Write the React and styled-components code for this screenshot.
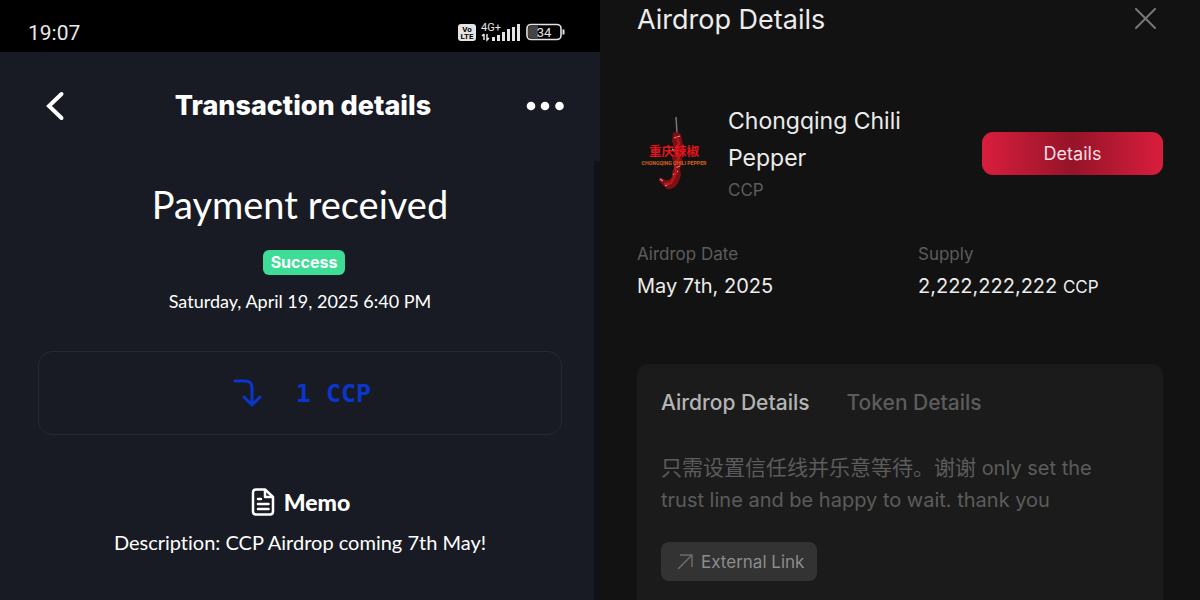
import React from 'react';
import styled, { createGlobalStyle } from 'styled-components';

const Global = createGlobalStyle`
  * { box-sizing: border-box; }
  body { margin: 0; background: #121212; }
  button { border: 0; padding: 0; margin: 0; background: none; font: inherit; color: inherit; cursor: pointer; }
  h1, h2, h3, p, dl, dd, dt { margin: 0; font-weight: 400; }
`;

const Page = styled.main`
  display: grid;
  grid-template-columns: minmax(0, 1fr) minmax(0, 1fr);
  min-height: 100vh;
`;

const Phone = styled.section`
  position: relative;
  display: flex;
  flex-direction: column;
  background: #181b23;
  color: #fff;
  font-family: Lato, sans-serif;
  font-variant-ligatures: none;
  text-align: center;
`;

const ScrollTrack = styled.div`
  position: absolute;
  top: 161px;
  right: 0;
  bottom: 0;
  width: 6px;
  background: #111217;
`;

const StatusBar = styled.div`
  display: flex;
  justify-content: space-between;
  align-items: center;
  height: 52px;
  padding: 13px 34px 0 28px;
  background: #000;
  color: #e8e8e8;
  font-family: Roboto, sans-serif;
`;

const Clock = styled.time`
  font-size: 21px;
  line-height: 24px;
`;

const StatusIcons = styled.svg`
  width: 108px;
  height: 24px;
`;

const TopBar = styled.header`
  display: flex;
  justify-content: space-between;
  align-items: center;
  height: 108px;
  padding: 0 34px 0 40px;
`;

const IconButton = styled.button`
  display: flex;
  justify-content: center;
  align-items: center;
  min-width: 36px;
  height: 40px;
`;

const BackButton = styled(IconButton)`
  width: 40px;
  justify-content: flex-start;
`;

const ScreenTitle = styled.h1`
  font-family: Inter, sans-serif;
  font-size: 27px;
  line-height: 36px;
  font-weight: 800;
`;

const Payment = styled.div`
  display: flex;
  flex-direction: column;
  align-items: center;
  padding: 18px 38px 0;
`;

const PaymentTitle = styled.h2`
  font-size: 38px;
  line-height: 52px;
`;

const Status = styled.span`
  margin: 20px 0 14px 8px;
  padding: 0 8px;
  border-radius: 6px;
  background: #3ddc97;
  font-family: Inter, sans-serif;
  font-size: 16px;
  line-height: 25px;
  font-weight: 700;
`;

const PaidAt = styled.p`
  font-size: 18px;
  line-height: 24px;
`;

const Amount = styled.div`
  display: flex;
  justify-content: center;
  align-items: center;
  gap: 33px;
  width: 100%;
  height: 84px;
  margin: 38px 0 47px;
  padding-left: 4px;
  border: 1px solid #262932;
  border-radius: 14px;
  color: #0a36cc;
  font-family: "DejaVu Sans Mono", monospace;
  font-size: 25px;
  font-weight: 700;
`;

const MemoTitle = styled.h3`
  display: flex;
  align-items: center;
  gap: 8px;
  margin-bottom: 8px;
  font-size: 23px;
  line-height: 40px;
  font-weight: 900;
`;

const MemoText = styled.p`
  font-size: 20px;
  line-height: 24px;
`;

const Airdrop = styled.section`
  display: flex;
  flex-direction: column;
  padding: 0 37px;
  background: #121212;
  color: #ececec;
  font-family: Inter, "Noto Sans CJK SC", sans-serif;
`;

const AirdropHeader = styled.header`
  display: flex;
  justify-content: space-between;
  align-items: center;
  height: 40px;
  margin-bottom: 63px;
`;

const AirdropTitle = styled.h1`
  font-size: 27px;
  line-height: 36px;
`;

const Token = styled.div`
  display: flex;
  align-items: center;
  height: 100px;
`;

const TokenText = styled.div`
  flex: 1;
  padding-left: 17px;
`;

const TokenName = styled.h2`
  max-width: 200px;
  font-size: 23px;
  line-height: 37px;
`;

const Ticker = styled.p`
  color: #5c5c5c;
  font-size: 17px;
  line-height: 26px;
`;

const DetailsButton = styled.button`
  width: 181px;
  height: 43px;
  border-radius: 11px;
  background: linear-gradient(90deg, #d91e3d, #951429 50%, #d91e3d);
  color: #fbdde2;
  font-size: 18px;
`;

const Facts = styled.dl`
  display: grid;
  grid-template-columns: 281px 1fr;
  margin: 38px 0 57px;
`;

const FactLabel = styled.dt`
  color: #5c5c5c;
  font-size: 17px;
  line-height: 26px;
`;

const FactValue = styled.dd`
  font-size: 20px;
  line-height: 39px;
`;

const Unit = styled.span`
  font-size: 17px;
`;

const Card = styled.div`
  flex: 1;
  padding: 20px 24px 19px;
  border-radius: 12px 12px 0 0;
  background: #1b1b1b;
`;

const Tabs = styled.div`
  display: flex;
  gap: 37px;
  margin-bottom: 30px;
`;

const Tab = styled.button`
  color: ${(p) => (p.$active ? '#b4b4b4' : '#5c5c5c')};
  font-size: 21px;
  line-height: 38px;
  font-weight: 500;
`;

const Note = styled.p`
  max-width: 450px;
  margin-bottom: 26px;
  color: #5c5c5c;
  font-size: 20px;
  line-height: 32px;
`;

const Chinese = styled.span`
  font-size: 21px;
`;

const Link = styled.a`
  display: flex;
  width: fit-content;
  align-items: center;
  gap: 8px;
  height: 39px;
  padding: 0 13px 0 16px;
  border-radius: 8px;
  background: #333;
  color: #8c8c8c;
  font-size: 17px;
  text-decoration: none;
`;

const BAR_HEIGHTS = [4, 6, 9, 12, 14, 17];

function DeviceStatus() {
  return (
    <StatusIcons viewBox="0 0 108 24" role="img" aria-label="VoLTE, 4G+, battery 34">
      <rect x="0" y="3" width="18" height="17" rx="3" fill="#e4e4e4" />
      <g fill="#000" fontWeight="700" fontSize="8" textAnchor="middle">
        <text x="9" y="11">Vo</text>
        <text x="9" y="18">LTE</text>
      </g>
      <text x="23" y="10" fill="#e4e4e4" fontSize="11">4G+</text>
      <path d="M26 13v6M24 15l2-2M29 13v6l2-2" stroke="#e4e4e4" strokeWidth="1.500" fill="none" />
      {BAR_HEIGHTS.map((h, i) => (
        <rect key={h} x={34 + i * 5} y={20 - h} width="3" height={h} fill="#e4e4e4" />
      ))}
      <path d="M73 5h7v12h-7a3 3 0 0 1-3-3V8a3 3 0 0 1 3-3z" fill="#444" />
      <rect x="69" y="3.500" width="34" height="15" rx="4" fill="none" stroke="#e4e4e4" strokeWidth="1.600" />
      <path d="M105.500 8.500v5" stroke="#e4e4e4" strokeWidth="2" />
      <text x="86" y="15.500" fill="#e4e4e4" fontSize="13" textAnchor="middle">34</text>
    </StatusIcons>
  );
}

function ChiliLogo() {
  return (
    <svg width="74" height="80" viewBox="0 0 74 80" role="img" aria-label="Chongqing Chili Pepper">
      <path d="M39 4l1 16" stroke="#777" strokeWidth="1.500" />
      <path d="M36 20q5-3 8 2l2 10-2 9 2 9-3 5 1 7-3 8q-4 7-11 6l-8-8q-1-4 3-3 4 4 8 1 3-2 2-7l3-6-3-8 3-8-3-9z" fill="#7d0f15" />
      <path d="M37 25l6-2M35 36l4 3M38 55l5-2M36 62l5-4M28 73l5-3M23 66l3 2" stroke="#d9908c" strokeWidth="1.200" />
      <path d="M40 24l2 7-4 6 4 7-4 8 1 8-5 10-7 1" fill="none" stroke="#b3181d" strokeWidth="2.500" />
      <text x="37" y="43" fill="#e3141b" fontFamily="'Noto Sans CJK SC', sans-serif" fontSize="12.500" fontWeight="700" textAnchor="middle">重庆辣椒</text>
      <text x="37" y="52" fill="#d4651c" fontFamily="Roboto, sans-serif" fontSize="5.200" fontWeight="700" textAnchor="middle">CHONGQING CHILI PEPPER</text>
    </svg>
  );
}

export default function App() {
  return (
    <Page>
      <Global />
      <Phone>
        <StatusBar>
          <Clock>19:07</Clock>
          <DeviceStatus />
        </StatusBar>
        <TopBar>
          <BackButton aria-label="Back">
            <svg width="30" height="32" viewBox="0 0 30 32" fill="none" stroke="#fff" strokeWidth="4" strokeLinecap="round">
              <path d="M21.500 4L9 16l12.500 12" />
            </svg>
          </BackButton>
          <ScreenTitle>Transaction details</ScreenTitle>
          <IconButton aria-label="More">
            <svg width="40" height="10" viewBox="0 0 40 10" fill="#fff">
              <circle cx="5" cy="5" r="4.300" />
              <circle cx="19" cy="5" r="4.300" />
              <circle cx="33.500" cy="5" r="4.300" />
            </svg>
          </IconButton>
        </TopBar>
        <Payment>
          <PaymentTitle>Payment received</PaymentTitle>
          <Status>Success</Status>
          <PaidAt>Saturday, April 19, 2025 6:40 PM</PaidAt>
          <Amount>
            <svg width="30" height="30" viewBox="0 0 30 30" fill="none" stroke="#0a36cc" strokeWidth="3" strokeLinecap="round" strokeLinejoin="round">
              <path d="M2 3h10q7 0 7 7v17M11 19l8 8 8-8" />
            </svg>
            <span>1 CCP</span>
          </Amount>
          <MemoTitle>
            <svg width="26" height="30" viewBox="0 0 26 30" fill="none" stroke="#fff" strokeWidth="2.500" strokeLinejoin="round">
              <path d="M15 2.500H6q-3 0-3 3v19q0 3 3 3h14q3 0 3-3V10z" />
              <path d="M15 2.500V10h8" />
              <path d="M8 12h3M8 17h10.500M8 22h10.500" strokeLinecap="round" />
            </svg>
            Memo
          </MemoTitle>
          <MemoText>Description: CCP Airdrop coming 7th May!</MemoText>
        </Payment>
        <ScrollTrack />
      </Phone>

      <Airdrop>
        <AirdropHeader>
          <AirdropTitle>Airdrop Details</AirdropTitle>
          <IconButton aria-label="Close">
            <svg width="36" height="24" viewBox="0 0 36 24" stroke="#777" strokeWidth="2" strokeLinecap="round">
              <path d="M9 1l19 19M28 1L9 20" />
            </svg>
          </IconButton>
        </AirdropHeader>
        <Token>
          <ChiliLogo />
          <TokenText>
            <TokenName>Chongqing Chili Pepper</TokenName>
            <Ticker>CCP</Ticker>
          </TokenText>
          <DetailsButton>Details</DetailsButton>
        </Token>
        <Facts>
          <div>
            <FactLabel>Airdrop Date</FactLabel>
            <FactValue>May 7th, 2025</FactValue>
          </div>
          <div>
            <FactLabel>Supply</FactLabel>
            <FactValue>2,222,222,222 <Unit>CCP</Unit></FactValue>
          </div>
        </Facts>
        <Card>
          <Tabs role="tablist">
            <Tab role="tab" aria-selected="true" $active>Airdrop Details</Tab>
            <Tab role="tab" aria-selected="false">Token Details</Tab>
          </Tabs>
          <Note><Chinese lang="zh">只需设置信任线并乐意等待。谢谢</Chinese> only set the trust line and be happy to wait. thank you</Note>
          <Link href="#external">
            <svg width="16" height="16" viewBox="0 0 16 16" fill="none" stroke="#6b6b6b" strokeWidth="1.500">
              <path d="M1 15L15 1M3 1h12v12" />
            </svg>
            External Link
          </Link>
        </Card>
      </Airdrop>
    </Page>
  );
}
